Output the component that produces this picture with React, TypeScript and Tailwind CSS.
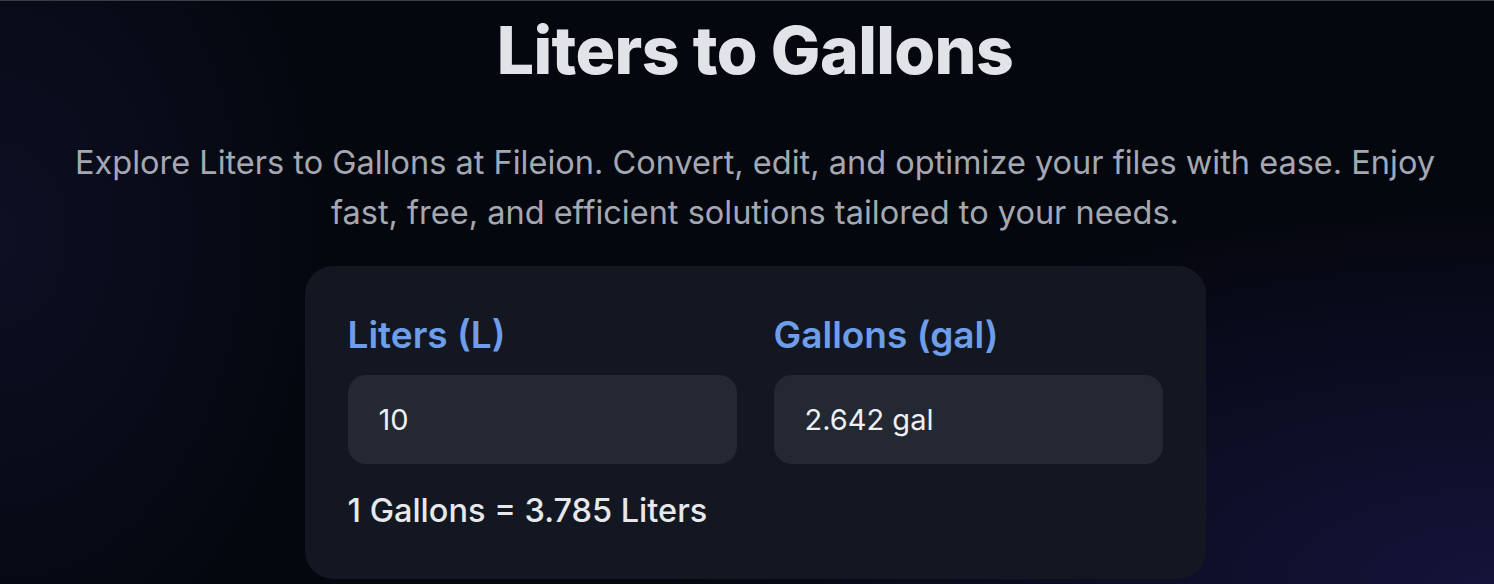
import React from "react";

export default function App() {
  return (
    <div
      className="relative w-full h-[584px] overflow-hidden border-t border-[#3b3e46] bg-[#05070f]"
      style={{ fontFamily: "Inter, 'Noto Sans', sans-serif" }}
    >
      <div className="pointer-events-none absolute inset-0 bg-[radial-gradient(ellipse_55%_65%_at_100%_100%,rgba(40,34,110,0.45),transparent)]" />
      <div className="pointer-events-none absolute inset-0 bg-[radial-gradient(ellipse_22%_80%_at_0%_40%,rgba(30,36,80,0.3),transparent)]" />
      <div className="relative flex flex-col items-center pl-[16px] pt-[16px]">
        <h1 className="text-[66px] leading-[66px] font-extrabold tracking-[-0.6px] text-[#e2e3e7]">
          Liters to Gallons
        </h1>
        <p className="mt-[55px] max-w-[1420px] text-center text-[32.5px] leading-[50px] text-[#a4a8b2]">
          Explore Liters to Gallons at Fileion. Convert, edit, and optimize your files with ease. Enjoy fast, free, and efficient solutions tailored to your needs.
        </p>
        <div className="mt-[28px] w-[901px] rounded-[28px] bg-[#131722] px-[43px] pt-[44px] pb-[45px]">
          <div className="grid grid-cols-2 gap-[37px]">
            <div className="flex flex-col">
              <label className="text-[37px] leading-[49px] font-semibold text-[#6e9ee9]">Liters (L)</label>
              <div className="mt-[16px] flex h-[89px] items-center rounded-[18px] bg-[#232833] px-[31px] text-[29px] text-[#eef0f3]">
                10
              </div>
            </div>
            <div className="flex flex-col">
              <label className="text-[37px] leading-[49px] font-semibold text-[#6e9ee9]">Gallons (gal)</label>
              <div className="mt-[16px] flex h-[89px] items-center rounded-[18px] bg-[#232833] px-[31px] text-[29px] text-[#eef0f3]">
                2.642 gal
              </div>
            </div>
          </div>
          <div className="mt-[24px] text-[32.5px] leading-[46px] font-medium text-[#e6e8ec]">
            1 Gallons = 3.785 Liters
          </div>
        </div>
      </div>
    </div>
  );
}
